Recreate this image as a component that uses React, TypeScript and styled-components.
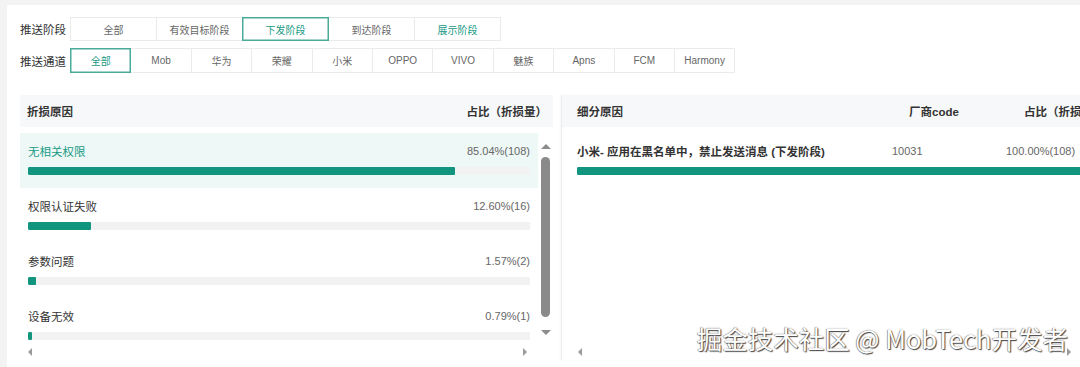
import React from 'react';
import styled, { createGlobalStyle } from 'styled-components';

const TEAL = '#11957f';

const stages = [
  { name: '全部' },
  { name: '有效目标阶段' },
  { name: '下发阶段', active: true },
  { name: '到达阶段' },
  { name: '展示阶段', tone: true },
];

const channels = [
  { name: '全部', active: true },
  { name: 'Mob' },
  { name: '华为' },
  { name: '荣耀' },
  { name: '小米' },
  { name: 'OPPO' },
  { name: 'VIVO' },
  { name: '魅族' },
  { name: 'Apns' },
  { name: 'FCM' },
  { name: 'Harmony' },
];

const reasons = [
  { name: '无相关权限', value: '85.04%(108)', pct: 85.04, selected: true },
  { name: '权限认证失败', value: '12.60%(16)', pct: 12.6 },
  { name: '参数问题', value: '1.57%(2)', pct: 1.57 },
  { name: '设备无效', value: '0.79%(1)', pct: 0.79 },
];

function App() {
  return (
    <Page>
      <GlobalStyle />
      <Card>
        <Filters>
          <FilterRow>
            <Label>推送阶段</Label>
            <Segments>
              {stages.map((s) => (
                <SegButton key={s.name} $w={87} $h={24} $active={s.active} $tone={s.tone}>
                  {s.name}
                </SegButton>
              ))}
            </Segments>
          </FilterRow>
          <FilterRow>
            <Label>推送通道</Label>
            <Segments>
              {channels.map((c) => (
                <SegButton key={c.name} $w={61.4} $h={25} $active={c.active}>
                  {c.name}
                </SegButton>
              ))}
            </Segments>
          </FilterRow>
        </Filters>

        <Panels>
          <LeftPanel>
            <Header>
              <span>折损原因</span>
              <span>占比（折损量）</span>
            </Header>
            <Body>
              <ListCol>
                <List>
                  {reasons.map((r) => (
                    <Row key={r.name} $selected={r.selected}>
                      <RowLine>
                        <RowName $selected={r.selected}>{r.name}</RowName>
                        <RowValue>{r.value}</RowValue>
                      </RowLine>
                      <Track>
                        <Fill style={{ width: `${r.pct}%` }} />
                      </Track>
                    </Row>
                  ))}
                </List>
                <HScroll $left={8} $right={11}>
                  <ArrowLeft />
                  <ArrowRight />
                </HScroll>
              </ListCol>
              <VScroll>
                <ArrowUp />
                <Thumb />
                <ArrowDown />
              </VScroll>
            </Body>
          </LeftPanel>

          <RightPanel>
            <GridHeader>
              <Cell>细分原因</Cell>
              <Cell $indent={17}>厂商code</Cell>
              <Cell $indent={18}>占比（折损量）</Cell>
            </GridHeader>
            <RightList>
              <DetailRow>
                <GridLine>
                  <DetailName>小米- 应用在黑名单中，禁止发送消息 (下发阶段)</DetailName>
                  <DetailValue>10031</DetailValue>
                  <DetailValue>100.00%(108)</DetailValue>
                </GridLine>
                <Track>
                  <Fill style={{ width: '100%' }} />
                </Track>
              </DetailRow>
            </RightList>
            <HScroll $left={16} $right={25}>
              <ArrowLeft />
              <ArrowRight />
            </HScroll>
          </RightPanel>
        </Panels>
      </Card>
      <Watermark>掘金技术社区 @ MobTech开发者</Watermark>
    </Page>
  );
}

const GlobalStyle = createGlobalStyle`
  html, body {
    margin: 0;
    padding: 0;
    overflow: hidden;
  }
  body {
    font-family: "Liberation Sans", "Noto Sans CJK SC", sans-serif;
    color: #333;
  }
  * {
    box-sizing: border-box;
  }
`;

const Page = styled.div`
  position: relative;
  width: 1080px;
  height: 367px;
  overflow: hidden;
  background: #f3f3f3;
  padding: 5px 0 0 7px;
`;

const Card = styled.div`
  height: 100%;
  background: #fff;
  padding: 12px 0 0 13px;
`;

const Filters = styled.div`
  display: flex;
  flex-direction: column;
  gap: 7px;
`;

const FilterRow = styled.div`
  display: flex;
  align-items: center;
`;

const Label = styled.div`
  width: 50px;
  font-size: 11.5px;
  color: #333;
`;

const Segments = styled.div`
  display: flex;
  padding-left: 1px;
`;

const SegButton = styled.div<{ $w: number; $h: number; $active?: boolean; $tone?: boolean }>`
  position: relative;
  z-index: ${(p) => (p.$active ? 1 : 0)};
  width: ${(p) => p.$w}px;
  height: ${(p) => p.$h}px;
  margin-left: -1px;
  display: flex;
  align-items: center;
  justify-content: center;
  border: 1px solid ${(p) => (p.$active ? '#4aab9a' : '#ebebeb')};
  box-shadow: ${(p) => (p.$active ? 'inset 0 0 0 0.5px #4aab9a' : 'none')};
  font-size: 10px;
  color: ${(p) => (p.$active || p.$tone ? '#1a9a85' : '#666')};
  background: #fff;
`;

const Panels = styled.div`
  display: flex;
  margin-top: 22px;
`;

const LeftPanel = styled.div`
  width: 533px;
  flex-shrink: 0;
`;

const Header = styled.div`
  height: 32px;
  display: flex;
  align-items: center;
  justify-content: space-between;
  padding: 0 6px 0 7px;
  background: #f7f8f9;
  font-size: 11.5px;
  font-weight: 700;
  color: #333;
`;

const Body = styled.div`
  display: flex;
  margin-top: 6px;
`;

const ListCol = styled.div`
  width: 518px;
`;

const List = styled.div`
  height: 212px;
  overflow: hidden;
`;

const Row = styled.div<{ $selected?: boolean }>`
  padding: 10px 8px 13px;
  background: ${(p) => (p.$selected ? '#eef8f6' : '#fff')};
`;

const RowLine = styled.div`
  display: flex;
  justify-content: space-between;
  align-items: center;
  height: 16px;
  margin-bottom: 8px;
`;

const RowName = styled.span<{ $selected?: boolean }>`
  font-size: 11.5px;
  color: ${(p) => (p.$selected ? '#1a9a85' : '#333')};
`;

const RowValue = styled.span`
  font-size: 11px;
  color: #666;
`;

const Track = styled.div`
  height: 8px;
  background: #f2f2f2;
  border-radius: 1px;
  overflow: hidden;
`;

const Fill = styled.div`
  height: 100%;
  min-width: 3px;
  background: ${TEAL};
  border-radius: 1px;
`;

const HScroll = styled.div<{ $left: number; $right: number }>`
  height: 14px;
  display: flex;
  align-items: center;
  justify-content: space-between;
  padding: 0 ${(p) => p.$right}px 0 ${(p) => p.$left}px;
`;

const ArrowLeft = styled.span`
  width: 0;
  height: 0;
  border-top: 4px solid transparent;
  border-bottom: 4px solid transparent;
  border-right: 4px solid #9a9a9a;
`;

const ArrowRight = styled.span`
  width: 0;
  height: 0;
  border-top: 4px solid transparent;
  border-bottom: 4px solid transparent;
  border-left: 4px solid #9a9a9a;
`;

const VScroll = styled.div`
  width: 15px;
  display: flex;
  flex-direction: column;
  align-items: center;
  padding-top: 11px;
`;

const ArrowUp = styled.span`
  width: 0;
  height: 0;
  border-left: 5px solid transparent;
  border-right: 5px solid transparent;
  border-bottom: 5px solid #8c8c8c;
  margin-bottom: 8px;
`;

const ArrowDown = styled.span`
  width: 0;
  height: 0;
  border-left: 5px solid transparent;
  border-right: 5px solid transparent;
  border-top: 5px solid #8c8c8c;
  margin-top: 13px;
`;

const Thumb = styled.div`
  width: 9px;
  height: 160px;
  border-radius: 5px;
  background: #8a8a8a;
`;

const RightPanel = styled.div`
  width: 535px;
  flex-shrink: 0;
  margin-left: 8px;
  border-left: 1px solid #ececec;
  box-shadow: -1px 0 2px rgba(0, 0, 0, 0.03);
  height: 265px;
`;

const GridHeader = styled.div`
  height: 32px;
  display: grid;
  grid-template-columns: 315px 114px 1fr;
  align-items: center;
  padding-left: 15px;
  background: #f7f8f9;
  font-size: 11.5px;
  font-weight: 700;
  color: #333;
  white-space: nowrap;
`;

const Cell = styled.div<{ $indent?: number }>`
  padding-left: ${(p) => p.$indent || 0}px;
`;

const RightList = styled.div`
  height: 212px;
  margin-top: 6px;
`;

const DetailRow = styled.div`
  padding: 10px 15px 13px;
`;

const GridLine = styled.div`
  display: grid;
  grid-template-columns: 315px 114px 1fr;
  align-items: center;
  height: 16px;
  margin-bottom: 8px;
  white-space: nowrap;
`;

const DetailName = styled.span`
  font-size: 11.5px;
  font-weight: 700;
  color: #333;
`;

const DetailValue = styled.span`
  font-size: 11px;
  color: #666;
`;

const Watermark = styled.div`
  position: absolute;
  right: 12px;
  bottom: 11px;
  font-family: "Noto Sans CJK SC", "Liberation Sans", sans-serif;
  font-size: 25.5px;
  color: #fff;
  white-space: nowrap;
  text-shadow: 1px 1px 1px #444, -0.5px -0.5px 0.5px #777, 0 0 2px rgba(0, 0, 0, 0.4);
`;

export default App;
